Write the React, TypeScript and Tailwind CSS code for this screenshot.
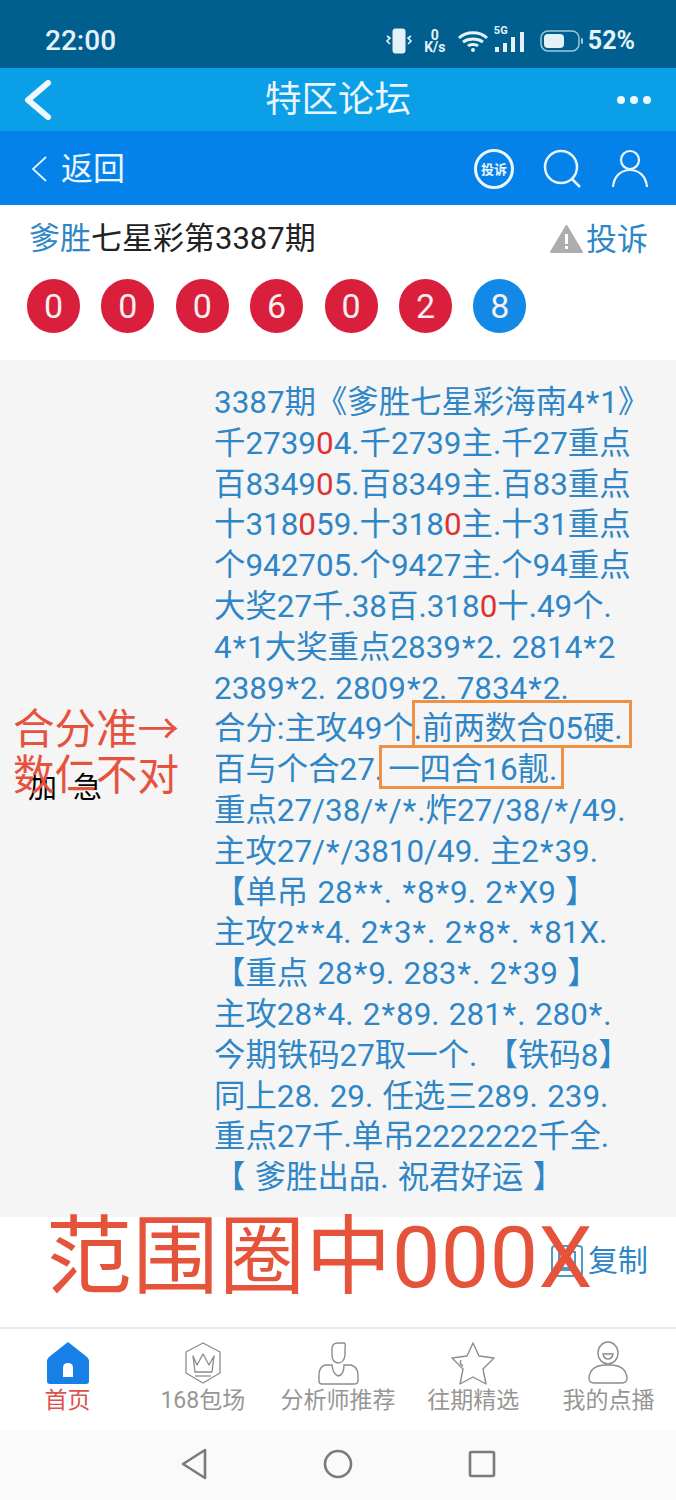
import React from "react";

function withStars(text: string) {
  return text.split("*").flatMap((part, i) =>
    i === 0
      ? [part]
      : [
          <span key={i} className="mx-[1px]">
            *
          </span>,
          part,
        ]
  );
}

const lines: React.ReactNode[] = [
  "3387期《爹胜七星彩海南4*1》",
  <>千2739<R>0</R>4.千2739主.千27重点</>,
  <>百8349<R>0</R>5.百8349主.百83重点</>,
  <>十318<R>0</R>59.十318<R>0</R>主.十31重点</>,
  "个942705.个9427主.个94重点",
  <>大奖27千.38百.318<R>0</R>十.49个.</>,
  "4*1大奖重点2839*2. 2814*2",
  "2389*2. 2809*2. 7834*2.",
  <>合分:主攻49个<span className="relative">.前两数合05硬.<span className="absolute left-[-2px] right-[-9px] top-[-10px] bottom-[-1px] border-[3px] border-[#ee9144]" /></span></>,
  <>百与个合27.<span className="relative ml-[5px]">一四合16靓.<span className="absolute left-[-9px] right-[-7px] top-[-6px] bottom-[-1px] border-[3px] border-[#ee9144]" /></span></>,
  "重点27/38/*/*.炸27/38/*/49.",
  "主攻27/*/3810/49. 主2*39.",
  "【单吊 28**. *8*9. 2*X9 】",
  "主攻2**4. 2*3*. 2*8*. *81X.",
  "【重点 28*9. 283*. 2*39 】",
  "主攻28*4. 2*89. 281*. 280*.",
  "今期铁码27取一个. 【铁码8】",
  "同上28. 29. 任选三289. 239.",
  "重点27千.单吊2222222千全.",
  "【 爹胜出品. 祝君好运 】",
];

function R({ children }: { children: React.ReactNode }) {
  return <span className="text-[#e0312f]">{children}</span>;
}

const balls = ["0", "0", "0", "6", "0", "2", "8"];

function StatusIcons() {
  return (
    <div className="flex items-center text-[#e4f2f8]">
      <svg width="28" height="26" viewBox="0 0 28 26" fill="none" stroke="currentColor">
        <rect x="8" y="1" width="12" height="24" rx="2" fill="currentColor" />
        <path d="M2 8l3 2-3 3 3 3M26 8l-3 2 3 3-3 3" strokeWidth="1.6" />
      </svg>
      <div className="ml-[10px] flex w-[24px] flex-col items-center text-[14px] font-bold leading-[12px]">
        <span>0</span>
        <span>K/s</span>
      </div>
      <svg className="ml-[10px]" width="32" height="24" viewBox="0 0 32 24" fill="none" stroke="currentColor" strokeWidth="3">
        <path d="M2 9c7-7 21-7 28 0M6 13c6-4 14-4 20 0M11 17c2-2 8-2 10 0" />
        <circle cx="16" cy="21" r="2" fill="currentColor" stroke="none" />
      </svg>
      <div className="relative ml-[4px] h-[26px] w-[36px]">
        <span className="absolute left-[1px] top-[-3px] text-[11px] font-bold leading-[12px]">5G</span>
        <svg className="absolute left-0 top-0" width="36" height="26" viewBox="0 0 36 26" fill="currentColor">
          <rect x="2" y="19" width="4" height="5" />
          <rect x="10" y="15" width="4" height="9" />
          <rect x="18" y="9" width="4" height="15" />
          <rect x="27" y="4" width="4" height="20" />
        </svg>
      </div>
      <svg className="ml-[11px]" width="44" height="24" viewBox="0 0 44 24" fill="none">
        <rect x="1" y="2" width="38" height="20" rx="7" stroke="currentColor" strokeWidth="1.5" opacity="0.7" />
        <rect x="4" y="5" width="20" height="14" rx="4" fill="currentColor" />
        <rect x="41" y="9" width="2" height="6" rx="1" fill="currentColor" opacity="0.7" />
      </svg>
      <span className="ml-[4px] text-[25px] font-bold leading-none">52%</span>
    </div>
  );
}

function TabHome() {
  return (
    <svg width="44" height="44" viewBox="0 0 44 44">
      <path d="M22 1 L41 16 Q43 18 43 20 V40 Q43 43 40 43 H4 Q1 43 1 40 V20 Q1 18 3 16 Z" fill="#1680e6" />
      <path d="M17 36 V27 Q17 22 22 22 Q27 22 27 27 V36 Z" fill="#fff" />
    </svg>
  );
}
function TabCrown() {
  return (
    <svg width="44" height="44" viewBox="0 0 44 44" fill="none" stroke="#8c8c8c" strokeWidth="1.3">
      <path d="M22 2 L39 11 V32 L22 42 L5 32 V11 Z" strokeLinejoin="round" />
      <path d="M12 15 L16 24 L22 13 L28 24 L33 15 L31 31 H14 Z" strokeLinejoin="round" />
      <path d="M14 35 H30" />
    </svg>
  );
}
function TabAnalyst() {
  return (
    <svg width="44" height="44" viewBox="0 0 44 44" fill="none" stroke="#8c8c8c" strokeWidth="1.4">
      <path d="M16 8 Q16 2 22 2 H28 Q30 2 29 8 V14 Q28 22 22 22 Q16 21 16 14 Z" />
      <path d="M16 24 H9 Q3 26 3 34 V40 Q3 43 6 43 H38 Q42 43 42 40 V34 Q42 26 35 24 H28 Q28 34 22 35 Q17 33 16 24 Z" />
    </svg>
  );
}
function TabStar() {
  return (
    <svg width="46" height="44" viewBox="0 0 46 44" fill="none" stroke="#8c8c8c" strokeWidth="1.4" strokeLinejoin="round">
      <path d="M23 2 L29 15 L44 17 L33 28 L36 43 L23 36 L10 43 L13 28 L2 17 L17 15 Z" />
      <path d="M11 19 Q9 23 13 25" />
    </svg>
  );
}
function TabMine() {
  return (
    <svg width="44" height="44" viewBox="0 0 44 44" fill="none" stroke="#8c8c8c" strokeWidth="1.4">
      <ellipse cx="22" cy="12" rx="10" ry="11" />
      <path d="M17 13 H27 Q26 18 22 18 Q18 18 17 13 Z" />
      <path d="M8 42 Q3 42 3 37 Q4 25 18 24 H26 Q40 25 41 37 Q41 42 36 42 Z" />
    </svg>
  );
}

const tabs = [
  { label: "168包场", icon: <TabCrown /> },
  { label: "分析师推荐", icon: <TabAnalyst /> },
  { label: "往期精选", icon: <TabStar /> },
  { label: "我的点播", icon: <TabMine /> },
];

export default function App() {
  return (
    <div className="flex h-[1500px] w-[676px] flex-col overflow-hidden bg-white font-['Roboto','Noto_Sans_CJK_SC',sans-serif]">
      <div className="flex h-[68px] items-center justify-between bg-[#005f8e] pl-[45px] pr-[41px] pt-[13px]">
        <span className="text-[28px] font-medium leading-none text-[#e4f2f8]">22:00</span>
        <StatusIcons />
      </div>

      <div className="relative flex h-[63px] items-center justify-center bg-[#0b9fe8] pt-[2px]">
        <svg className="absolute left-[22px] top-[11px]" width="30" height="42" viewBox="0 0 30 42" fill="none" stroke="#eef8fd" strokeWidth="6" strokeLinecap="round" strokeLinejoin="round">
          <path d="M26 4 L6 21 L26 38" />
        </svg>
        <span className="text-[36.5px] leading-none text-[#eaf6fc]">特区论坛</span>
        <div className="absolute right-[25px] top-[28px] flex gap-[5px]">
          <span className="h-[8px] w-[8px] rounded-full bg-[#eef8fd]" />
          <span className="h-[8px] w-[8px] rounded-full bg-[#eef8fd]" />
          <span className="h-[8px] w-[8px] rounded-full bg-[#eef8fd]" />
        </div>
      </div>

      <div className="flex h-[74px] items-center bg-[#0581ea] pl-[31px] pr-[28px] pt-[2px]">
        <svg width="17" height="28" viewBox="0 0 17 28" fill="none" stroke="#eaf5fd" strokeWidth="1.8">
          <path d="M15 2 L2 14 L15 26" />
        </svg>
        <span className="ml-[13px] text-[32px] leading-none text-[#eaf5fd]">返回</span>
        <div className="ml-auto flex items-center">
          <div className="flex h-[40px] w-[40px] items-center justify-center rounded-full border-[3px] border-[#eaf5fd] text-[13px] font-bold leading-none text-[#eaf5fd]">投诉</div>
          <svg className="ml-[29px]" width="40" height="40" viewBox="0 0 40 40" fill="none" stroke="#eaf5fd" strokeWidth="2.5">
            <circle cx="18" cy="18" r="16" />
            <path d="M29 30 L37 38" />
          </svg>
          <svg className="ml-[29px]" width="36" height="40" viewBox="0 0 36 40" fill="none" stroke="#eaf5fd" strokeWidth="2.2">
            <circle cx="18" cy="11" r="9" />
            <path d="M1 38 C2 27 9 21 18 21 C27 21 34 27 35 38" />
          </svg>
        </div>
      </div>

      <div className="h-[155px] bg-white px-[27px] pt-[14px]">
        <div className="flex items-center justify-between pl-[2px] pr-[1px]">
          <div className="text-[31px] leading-[40px] text-[#222]">
            <span className="text-[#2f86c6]">爹胜</span>七星彩第3387期
          </div>
          <div className="flex items-center">
            <svg width="33" height="30" viewBox="0 0 33 30">
              <path d="M16.5 2 L32 28 H1 Z" fill="#adadad" stroke="#adadad" strokeWidth="2" strokeLinejoin="round" />
              <rect x="15" y="10" width="3" height="10" fill="#fff" />
              <rect x="15" y="22" width="3" height="3" fill="#fff" />
            </svg>
            <span className="ml-[3px] text-[31px] leading-none text-[#2f86c6]">投诉</span>
          </div>
        </div>
        <div className="mt-[20px] flex gap-[21.4px]">
          {balls.map((b, i) => (
            <div
              key={i}
              className={`flex h-[54px] w-[53px] items-center justify-center rounded-full text-[34px] leading-none text-[#f7eef0] ${i === 6 ? "bg-[#1289e6]" : "bg-[#d91f3c]"}`}
            >
              {b}
            </div>
          ))}
        </div>
      </div>

      <div className="relative flex h-[857px] bg-[#f5f5f5]">
        <div className="flex w-[214px] items-center pl-[28px] text-[29px] leading-none text-black">
          <span>加</span>
          <span className="ml-[16px]">急</span>
        </div>
        <div className="flex-1 whitespace-nowrap pt-[23px] text-[31.4px] leading-[40.8px] text-[#2f86c6] [word-spacing:1.5px]">
          {lines.map((l, i) => (
            <div key={i}>{typeof l === "string" ? withStars(l) : l}</div>
          ))}
        </div>
        <div className="absolute left-[13px] top-[347px] text-[41.5px] leading-[46px] text-[#e5533f]">
          <div>合分准→</div>
          <div>数仁不对</div>
        </div>
      </div>

      <div className="relative flex h-[110px] items-start justify-end bg-white pr-[28px] pt-[27px]">
        <div className="flex items-center">
          <svg width="34" height="34" viewBox="0 0 34 34" fill="none" stroke="#4e9bc9" strokeWidth="2">
            <rect x="2" y="2" width="30" height="30" rx="3" />
            <rect x="9" y="8" width="16" height="16" />
            <path d="M6 26 H28" />
          </svg>
          <span className="ml-[4px] text-[30px] leading-[34px] text-[#2f86c6]">复制</span>
        </div>
        <div className="absolute left-[46px] top-[-9px] whitespace-nowrap text-[86px] leading-[100px] tracking-[0.5px] text-[#e5533a]">范围圈中000X</div>
      </div>

      <div className="grid h-[104px] grid-cols-5 border-t-2 border-[#e9e9e9] bg-white pt-[12px]">
        <div className="flex flex-col items-center">
          <TabHome />
          <span className="mt-[2px] text-[23px] leading-[28px] text-[#d9534f]">首页</span>
        </div>
        {tabs.map((t) => (
          <div key={t.label} className="flex flex-col items-center">
            {t.icon}
            <span className="mt-[2px] whitespace-nowrap text-[23px] leading-[28px] text-[#969696]">{t.label}</span>
          </div>
        ))}
      </div>

      <div className="flex h-[69px] items-center justify-center gap-[115px] bg-[#fafafa] pb-[4px]">
        <svg width="28" height="32" viewBox="0 0 28 32" fill="none" stroke="#7a7a7a" strokeWidth="2.6" strokeLinejoin="round">
          <path d="M25 2 V30 L3 16 Z" />
        </svg>
        <svg width="30" height="30" viewBox="0 0 30 30" fill="none" stroke="#7a7a7a" strokeWidth="2.6">
          <circle cx="15" cy="15" r="13" />
        </svg>
        <svg width="28" height="28" viewBox="0 0 28 28" fill="none" stroke="#7a7a7a" strokeWidth="2.6">
          <rect x="2" y="2" width="24" height="24" rx="1.5" />
        </svg>
      </div>
    </div>
  );
}
